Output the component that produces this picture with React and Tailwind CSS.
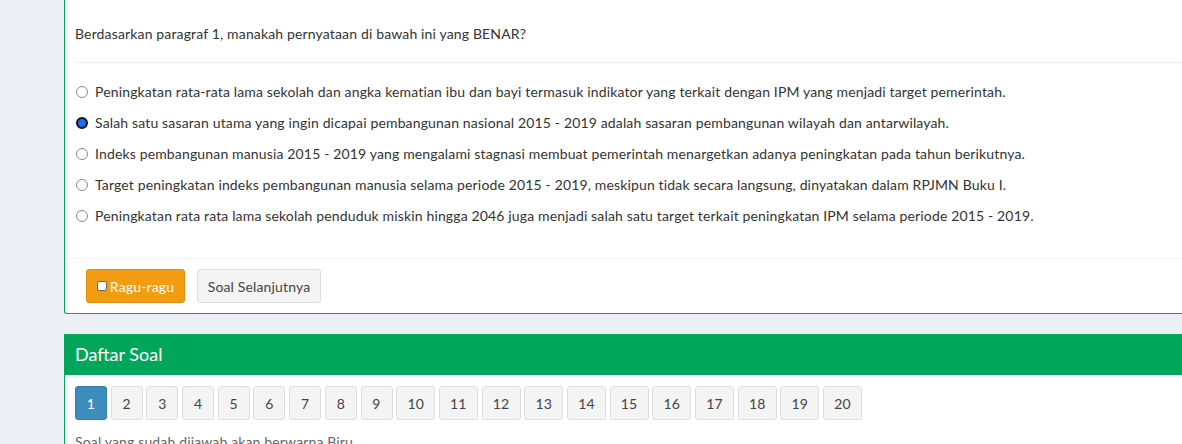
import React from "react";

const options = [
  "Peningkatan rata-rata lama sekolah dan angka kematian ibu dan bayi termasuk indikator yang terkait dengan IPM yang menjadi target pemerintah.",
  "Salah satu sasaran utama yang ingin dicapai pembangunan nasional 2015 - 2019 adalah sasaran pembangunan wilayah dan antarwilayah.",
  "Indeks pembangunan manusia 2015 - 2019 yang mengalami stagnasi membuat pemerintah menargetkan adanya peningkatan pada tahun berikutnya.",
  "Target peningkatan indeks pembangunan manusia selama periode 2015 - 2019, meskipun tidak secara langsung, dinyatakan dalam RPJMN Buku I.",
  "Peningkatan rata rata lama sekolah penduduk miskin hingga 2046 juga menjadi salah satu target terkait peningkatan IPM selama periode 2015 - 2019.",
];

const Radio = ({ checked }) =>
  checked ? (
    <span className="mt-[4px] h-[12px] w-[12px] shrink-0 rounded-full border-2 border-[#111] bg-[#1a6df0]" />
  ) : (
    <span className="mt-[4px] h-[12px] w-[12px] shrink-0 rounded-full border border-[#8a8a8a] bg-white" />
  );

const App = () => {
  const nums = Array.from({ length: 20 }, (_, i) => i + 1);

  return (
    <div className="h-[444px] w-[1182px] overflow-hidden bg-[#ecf0f5] pl-[64px] font-['Lato',sans-serif] text-[14px] tracking-[0.15px] text-[#333]">
      {/* soal */}
      <div className="w-[1130px] rounded-bl-[3px] border-b border-l border-[#00a65a] bg-white">
        <div className="px-[10px] pt-[24px]">
          <p className="h-[20px] leading-[20px]">Berdasarkan paragraf 1, manakah pernyataan di bawah ini yang BENAR?</p>
          <div className="mt-[18px] border-t border-[#eee]" />
          <div className="mt-[19px] flex flex-col gap-[11px] pb-[32px]">
            {options.map((opt, i) => (
              <label key={i} className="flex h-[20px] items-start gap-[7px] pl-[1px] leading-[20px]">
                <Radio checked={i === 1} />
                <span className="whitespace-nowrap">{opt}</span>
              </label>
            ))}
          </div>
        </div>
        <div className="flex gap-[12px] border-t border-[#f4f4f4] py-[10px] pl-[21px]">
          <button className="flex h-[34px] w-[99px] items-center justify-center gap-[3px] rounded-[3px] border border-[#e08e0b] bg-[#f39c12] text-white">
            <span className="h-[10px] w-[10px] rounded-[2px] border border-[#666] bg-white" />
            Ragu-ragu
          </button>
          <button className="h-[34px] w-[124px] rounded-[3px] border border-[#ddd] bg-[#f4f4f4] text-[#444]">
            Soal Selanjutnya
          </button>
        </div>
      </div>

      {/* daftar soal */}
      <div className="mt-[20px] w-[1130px] border-l border-[#00a65a] bg-white">
        <div className="flex h-[41px] items-center bg-[#00a65a] px-[10px] text-[18px] tracking-normal text-white">Daftar Soal</div>
        <div className="px-[10px] pt-[11px]">
          <div className="flex gap-[3.7px]">
            {nums.map((n) => (
              <button
                key={n}
                className={
                  n === 1
                    ? "h-[34px] w-[32px] rounded-[3px] border border-[#367fa9] bg-[#3c8dbc] text-white"
                    : n < 10
                    ? "h-[34px] w-[32px] rounded-[3px] border border-[#ddd] bg-[#f4f4f4] text-[#444]"
                    : "h-[34px] w-[39px] rounded-[3px] border border-[#ddd] bg-[#f4f4f4] text-[#444]"
                }
              >
                {n}
              </button>
            ))}
          </div>
          <p className="mt-[12px] leading-[20px] text-[#666]">Soal yang sudah dijawab akan berwarna Biru.</p>
        </div>
      </div>
    </div>
  );
};

export default App;
